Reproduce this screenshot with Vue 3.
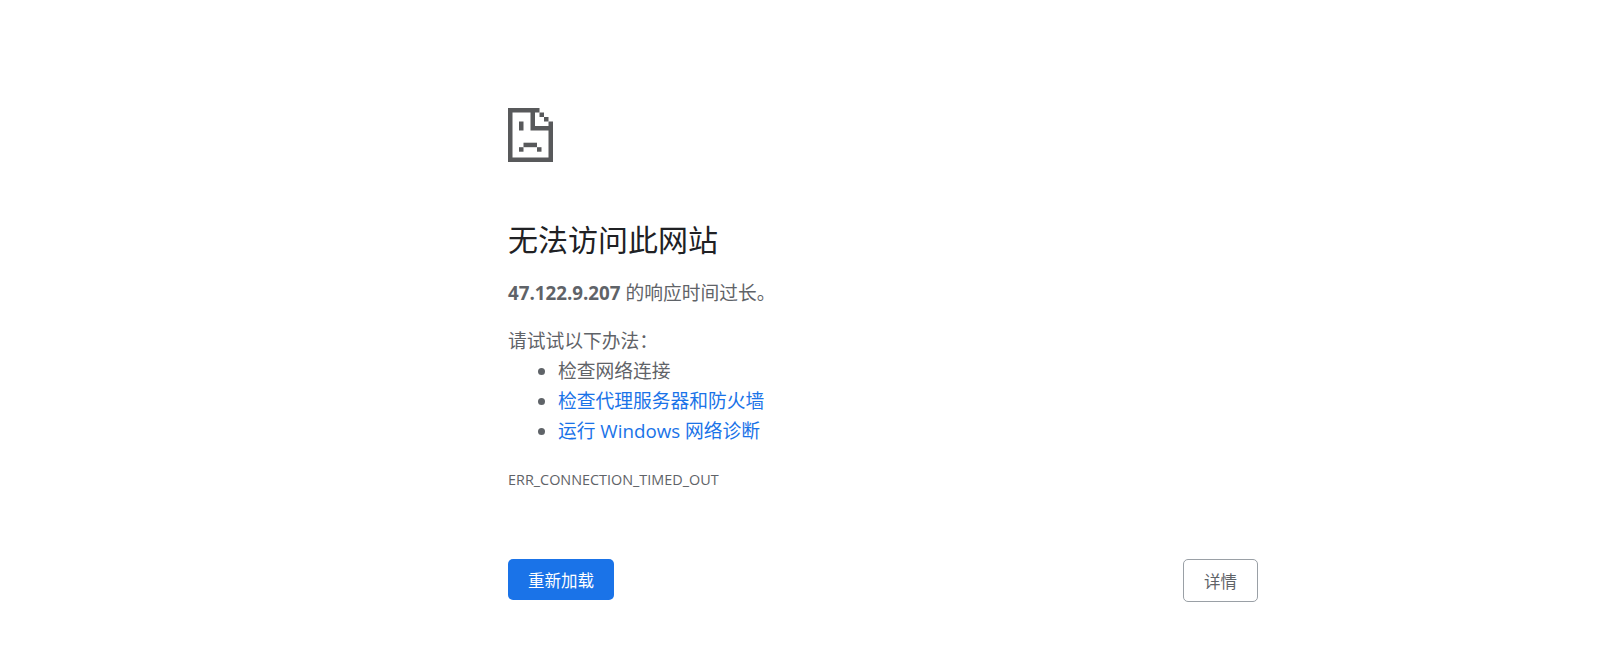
<template>
  <div class="page">
    <div class="wrapper">
      <svg class="icon" viewBox="0 0 45 54" width="45" height="54" fill="#58595b">
        <path d="M0 0H31.500V4.500H27V18H45V54H0ZM4.500 4.500V49.500H40.500V22.500H22.500V4.500Z" fill-rule="evenodd" />
        <rect x="31.500" y="4.500" width="4.500" height="4.500" />
        <rect x="36" y="9" width="4.500" height="4.500" />
        <rect x="40.500" y="13.500" width="4.500" height="4.500" />
        <rect x="11" y="13.500" width="4.500" height="9" />
        <rect x="15.500" y="34.700" width="13.500" height="4.500" />
        <rect x="11" y="39.200" width="4.500" height="4.500" />
        <rect x="29" y="39.200" width="4.500" height="4.500" />
      </svg>
      <h1>无法访问此网站</h1>
      <p class="summary"><strong>47.122.9.207</strong> 的响应时间过长。</p>
      <div class="suggest">
        <p>请试试以下办法：</p>
        <ul>
          <li>检查网络连接</li>
          <li><a href="#">检查代理服务器和防火墙</a></li>
          <li><a href="#">运行 Windows 网络诊断</a></li>
        </ul>
      </div>
      <div class="code">ERR_CONNECTION_TIMED_OUT</div>
      <div class="actions">
        <button class="reload">重新加载</button>
        <button class="details">详情</button>
      </div>
    </div>
  </div>
</template>

<script setup>
</script>

<style>
html, body {
  margin: 0;
  background: #fff;
}
</style>

<style scoped>
.page {
  height: 660px;
  overflow: hidden;
  font-family: "Open Sans", "Noto Sans CJK SC", sans-serif;
  font-size: 18.75px;
  line-height: 30px;
  color: #5f6368;
}

.wrapper {
  width: 750px;
  margin-left: 508px;
  padding-top: 107.500px;
}

.icon {
  display: block;
}

h1 {
  margin: 56.500px 0 0;
  font-size: 30px;
  font-weight: 400;
  line-height: 44px;
  color: #202124;
}

p {
  margin: 0;
}

.summary {
  margin-top: 15.500px;
}

.suggest {
  margin-top: 18.500px;
}

ul {
  margin: 0;
  padding-left: 50px;
}

a {
  color: #1a73e8;
  text-decoration: none;
}

.code {
  margin-top: 22px;
  font-size: 14.400px;
  line-height: 24px;
}

.actions {
  display: flex;
  justify-content: space-between;
  margin-top: 67px;
}

button {
  height: 41px;
  border-radius: 5px;
  font-family: inherit;
  font-size: 16.500px;
  cursor: pointer;
}

.reload {
  width: 106px;
  border: 0;
  background: #1a73e8;
  color: #fff;
}

.details {
  width: 75px;
  height: 43px;
  border: 1px solid #9aa0a6;
  background: #fff;
  color: #5f6368;
}
</style>
